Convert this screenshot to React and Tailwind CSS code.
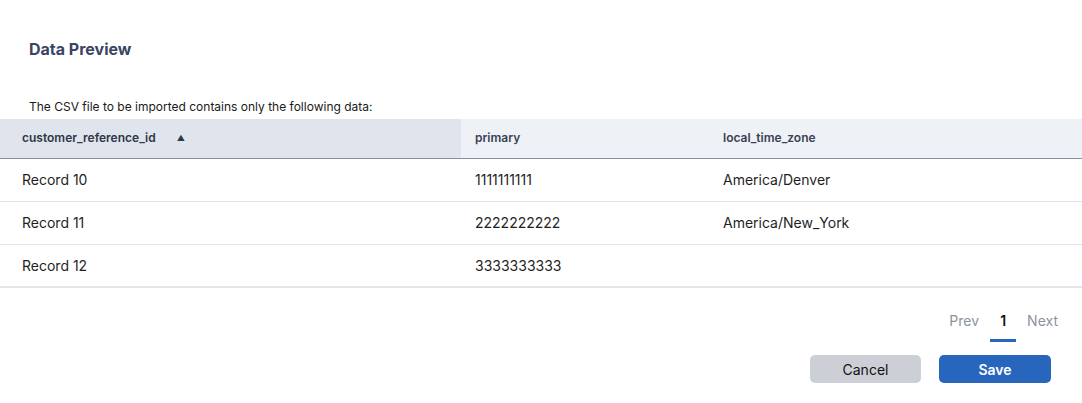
import React from 'react';

const rows = [
  { id: 'Record 10', primary: '1111111111', tz: 'America/Denver' },
  { id: 'Record 11', primary: '2222222222', tz: 'America/New_York' },
  { id: 'Record 12', primary: '3333333333', tz: '' },
];

const App = () => {
  return (
    <div className="w-[1082px] h-[403px] bg-white font-['Inter',sans-serif] overflow-hidden">
      {/* Title */}
      <div className="pt-[39px] px-[29px] h-[98px]">
        <h2 className="text-[16px] leading-[20px] font-bold text-[#3a4563]">Data Preview</h2>
      </div>
      <p className="px-[29px] text-[12px] leading-[16px] text-[#1a1a1a] h-[21px] pt-[1px]">
        The CSV file to be imported contains only the following data:
      </p>

      {/* Table */}
      <table className="w-full border-collapse border-b-2 border-[#e3e6eb]">
        <thead>
          <tr className="h-[39px] border-b border-[#868ea0]">
            <th className="w-[461px] bg-[#e0e4ec] text-left pl-[22px] text-[12px] font-semibold text-[#2f3647]">
              <span>customer_reference_id</span>
              <span className="ml-[21px] text-[8px] align-[1px]">▲</span>
            </th>
            <th className="w-[248px] bg-[#eef1f6] text-left pl-[14px] text-[12px] font-semibold text-[#3a4154]">
              primary
            </th>
            <th className="bg-[#eef1f6] text-left pl-[14px] text-[12px] font-semibold text-[#3a4154]">
              local_time_zone
            </th>
          </tr>
        </thead>
        <tbody>
          {rows.map((row, i) => (
            <tr key={row.id} className={`h-[43px] ${i < rows.length - 1 ? 'border-b border-[#e1e4e9]' : ''}`}>
              <td className="pl-[22px] text-[14px] text-[#1f1f1f]">{row.id}</td>
              <td className="pl-[14px] text-[14px] text-[#1f1f1f]">{row.primary}</td>
              <td className="pl-[14px] text-[14px] text-[#1f1f1f]">{row.tz}</td>
            </tr>
          ))}
        </tbody>
      </table>

      {/* Pagination */}
      <div className="flex justify-end items-start pr-[22px] pt-[22px] h-[67px] text-[14px]">
        <button className="text-[#8c93a0] px-[2px]">Prev</button>
        <div className="flex flex-col items-center mx-[9px] w-[26px]">
          <span className="font-semibold text-[#111]">1</span>
          <span className="mt-[8px] w-[26px] h-[3px] bg-[#2866bd]" />
        </div>
        <button className="text-[#8c93a0] px-[2px]">Next</button>
      </div>

      {/* Actions */}
      <div className="flex justify-end gap-[18px] pr-[31px]">
        <button className="w-[111px] h-[28px] rounded-[5px] bg-[#ccd0d6] text-[14px] text-[#111]">
          Cancel
        </button>
        <button className="w-[112px] h-[28px] rounded-[5px] bg-[#2866bd] text-[14px] font-semibold text-white">
          Save
        </button>
      </div>
    </div>
  );
};

export default App;
